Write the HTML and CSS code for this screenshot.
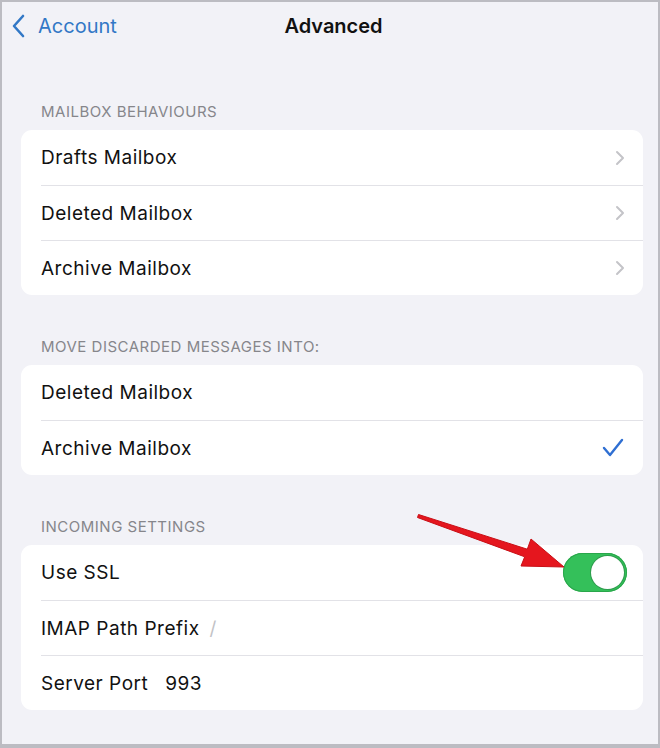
FILE: index.html
```html
<!DOCTYPE html>
<html lang="en">
<head>
    <meta charset="UTF-8">
    <meta name="viewport" content="width=device-width, initial-scale=1.0">
    <title>Advanced</title>
    <link rel="stylesheet" href="styles.css">
</head>
<body>
    <div class="screen">
        <div class="nav">
            <a class="back" href="#">
                <svg class="back-icon" width="14" height="24" viewBox="0 0 14 24">
                    <path d="M12 2 L3 12 L12 22" fill="none" stroke="currentColor" stroke-width="2.6" stroke-linecap="round" stroke-linejoin="round"/>
                </svg>
                <span>Account</span>
            </a>
            <h1 class="title">Advanced</h1>
            <span></span>
        </div>

        <!-- Mailbox behaviours -->
        <div class="group">
            <h2 class="group-title">MAILBOX BEHAVIOURS</h2>
            <div class="card">
                <div class="row">
                    <div class="row-body">
                        <span class="label">Drafts Mailbox</span>
                        <svg class="chevron" width="10" height="16" viewBox="0 0 10 16"><path d="M2 2 L8 8 L2 14" fill="none" stroke="#c4c4c8" stroke-width="2" stroke-linecap="round" stroke-linejoin="round"/></svg>
                    </div>
                </div>
                <div class="row">
                    <div class="row-body">
                        <span class="label">Deleted Mailbox</span>
                        <svg class="chevron" width="10" height="16" viewBox="0 0 10 16"><path d="M2 2 L8 8 L2 14" fill="none" stroke="#c4c4c8" stroke-width="2" stroke-linecap="round" stroke-linejoin="round"/></svg>
                    </div>
                </div>
                <div class="row">
                    <div class="row-body">
                        <span class="label">Archive Mailbox</span>
                        <svg class="chevron" width="10" height="16" viewBox="0 0 10 16"><path d="M2 2 L8 8 L2 14" fill="none" stroke="#c4c4c8" stroke-width="2" stroke-linecap="round" stroke-linejoin="round"/></svg>
                    </div>
                </div>
            </div>
        </div>

        <!-- Discarded messages -->
        <div class="group">
            <h2 class="group-title">MOVE DISCARDED MESSAGES INTO:</h2>
            <div class="card">
                <div class="row">
                    <div class="row-body">
                        <span class="label">Deleted Mailbox</span>
                    </div>
                </div>
                <div class="row">
                    <div class="row-body">
                        <span class="label">Archive Mailbox</span>
                        <svg class="check" width="22" height="20" viewBox="0 0 22 20"><path d="M2 10 L8 17 L20 2" fill="none" stroke="#2f6fd2" stroke-width="2.4" stroke-linecap="round" stroke-linejoin="round"/></svg>
                    </div>
                </div>
            </div>
        </div>

        <!-- Incoming settings -->
        <div class="group">
            <h2 class="group-title">INCOMING SETTINGS</h2>
            <div class="card">
                <div class="row">
                    <div class="row-body">
                        <span class="label">Use SSL</span>
                        <span class="toggle"><span class="knob"></span></span>
                    </div>
                </div>
                <div class="row">
                    <div class="row-body start">
                        <span class="label">IMAP Path Prefix</span>
                        <span class="value muted">/</span>
                    </div>
                </div>
                <div class="row">
                    <div class="row-body start">
                        <span class="label">Server Port</span>
                        <span class="value">993</span>
                    </div>
                </div>
            </div>
        </div>

        <svg class="pointer" width="160" height="64" viewBox="0 0 160 64">
            <polygon points="1.5,1.5 110.3,36.2 114,26 147,54 104,53 107.7,43.8 0.5,4.5" fill="#e5161e" stroke="#c80f16" stroke-width="1" stroke-linejoin="round"/>
        </svg>
    </div>
</body>
</html>
```

FILE: styles.css
```css
* {
    box-sizing: border-box;
}
body {
    margin: 0;
    font-family: Inter, "Liberation Sans", Arial, sans-serif;
    background: #ffffff;
}
.screen {
    position: relative;
    width: 660px;
    height: 748px;
    background: #f2f2f7;
    border: 2px solid #bcbcc2;
    border-bottom-width: 4px;
    padding: 0 15px 0 19px;
    overflow: hidden;
}
.nav {
    display: grid;
    grid-template-columns: 1fr auto 1fr;
    align-items: center;
    height: 48px;
    margin: 0 -5px 0 -10px;
}
.back {
    display: flex;
    align-items: center;
    gap: 13px;
    color: #3278c6;
    text-decoration: none;
    font-size: 20px;
}
.back-icon {
    display: block;
}
.title {
    margin: 0;
    padding-left: 8px;
    font-size: 20px;
    font-weight: 600;
    color: #111;
}
.group {
    padding-top: 43px;
}
.nav + .group {
    padding-top: 53px;
}
.group-title {
    margin: 0 0 9px 20px;
    font-size: 15px;
    line-height: 18px;
    font-weight: 400;
    color: #86868b;
    letter-spacing: 0.5px;
}
.card {
    background: #ffffff;
    border-radius: 11px;
}
.row {
    padding-left: 20px;
}
.row + .row .row-body {
    border-top: 1px solid #e2e2e7;
}
.row-body {
    display: flex;
    align-items: center;
    justify-content: space-between;
    height: 55px;
    padding-right: 18px;
}
.row-body.start {
    justify-content: flex-start;
    gap: 17px;
}
.label,
.value {
    font-size: 19px;
    letter-spacing: 0.5px;
    color: #111;
}
.muted {
    margin-left: -7px;
    color: #c2c2c6;
}
.chevron {
    display: block;
}
.check {
    display: block;
    margin-right: 1px;
}
.toggle {
    position: relative;
    display: block;
    width: 64px;
    height: 39px;
    margin-right: -2px;
    border-radius: 20px;
    background: #34c05a;
    box-shadow: inset 0 0 0 1px #2aa64b;
}
.knob {
    position: absolute;
    top: 3px;
    right: 3px;
    width: 33px;
    height: 33px;
    border-radius: 50%;
    background: #ffffff;
    box-shadow: 0 0 0 1px #2e9a4d;
}
.pointer {
    position: absolute;
    left: 415px;
    top: 511px;
}
```
